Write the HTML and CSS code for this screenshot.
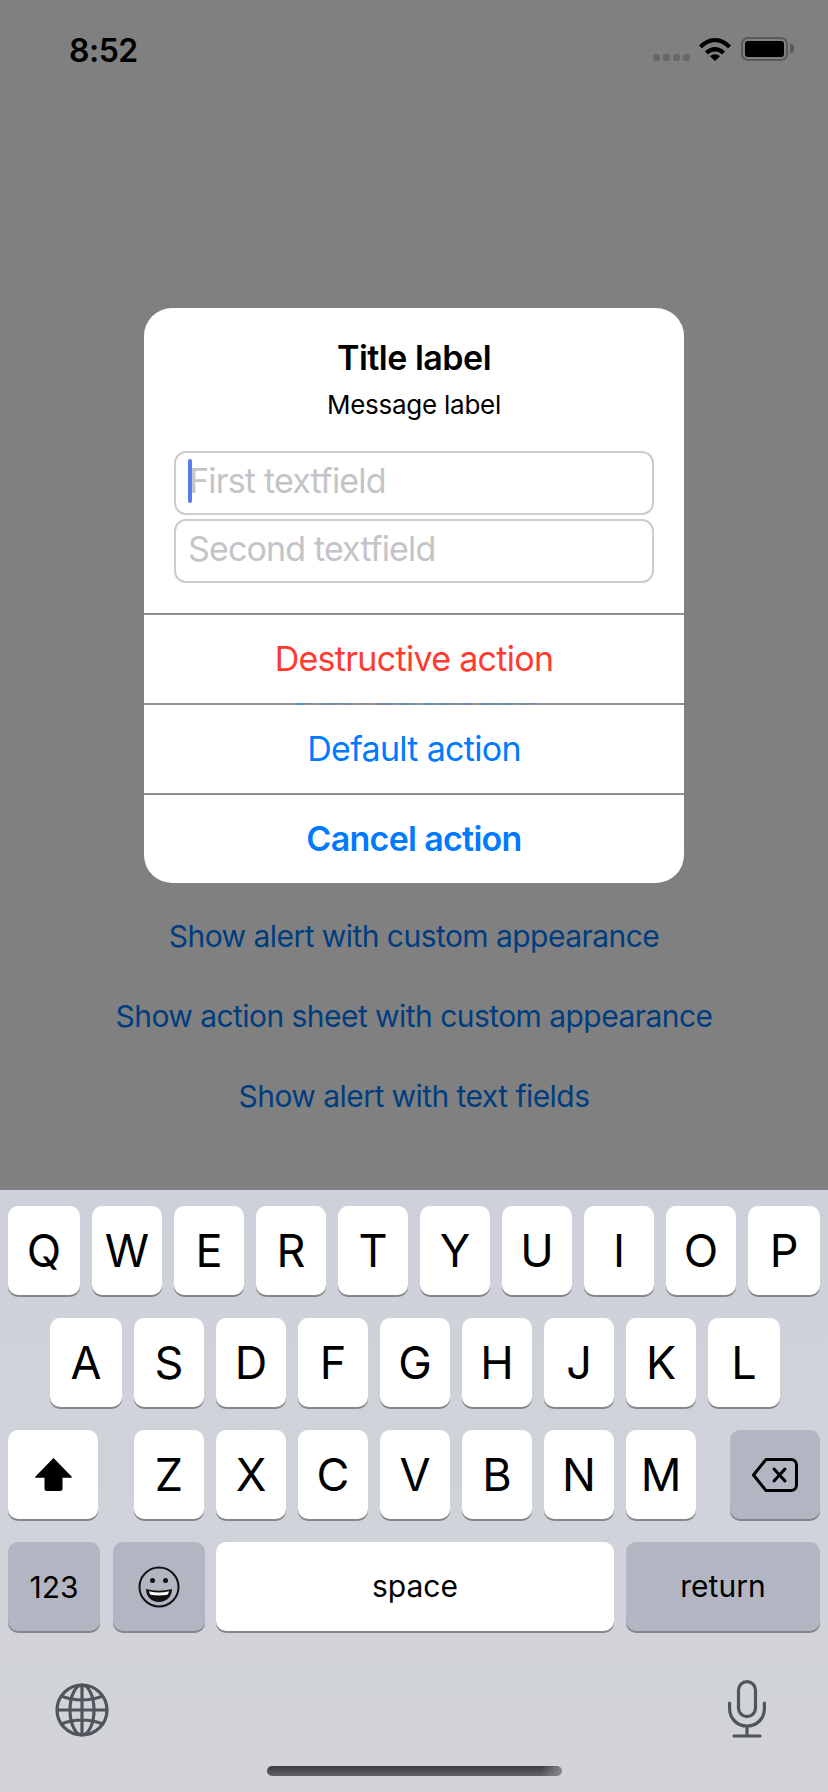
FILE: index.html
```html
<!DOCTYPE html>
<html lang="en">
<head>
<meta charset="utf-8">
<title>Alert with text fields</title>
<link rel="stylesheet" href="styles.css">
</head>
<body>
<div class="screen">
  <header class="status">
    <span class="time">8:52</span>
    <div class="status-icons">
      <div class="signal"><i></i><i></i><i></i><i></i></div>
      <svg class="wifi" viewBox="0 0 32 24" width="32" height="24"><path d="M0 8.6C4 4.2 9.7 1 16 1s12 3.2 16 7.6l-3 3C25.700 8 21.200 5.300 16 5.300S6.300 8 3 11.600Z"/><path d="M6 14.400C8.600 11.700 12.100 10 16 10s7.400 1.700 10 4.400l-3 3C21.200 15.600 18.700 14.400 16 14.400s-5.200 1.200-7 3Z"/><path d="M11 19.200C12.300 18 14.100 17.200 16 17.200s3.700.8 5 2L16 24Z"/></svg>
      <div class="battery"><div class="battery-fill"></div></div>
    </div>
  </header>
  <main class="links">
    <a class="link">Show alert with custom appearance</a>
    <a class="link">Show action sheet with custom appearance</a>
    <a class="link">Show alert with text fields</a>
  </main>
  <section class="keyboard">
    <div class="row">
      <div class="key wide">Q</div><div class="key">W</div><div class="key">E</div><div class="key">R</div><div class="key">T</div><div class="key">Y</div><div class="key">U</div><div class="key">I</div><div class="key">O</div><div class="key wide">P</div>
    </div>
    <div class="row row-home">
      <div class="key wide">A</div><div class="key">S</div><div class="key">D</div><div class="key">F</div><div class="key">G</div><div class="key">H</div><div class="key">J</div><div class="key">K</div><div class="key wide">L</div>
    </div>
    <div class="row">
      <div class="key shift">
        <svg viewBox="0 0 37 33" width="37" height="33"><path d="M18.500 0 36.500 18.500a.7.7 0 0 1-.5 1.300H27.500V30.500a2.500 2.500 0 0 1-2.500 2.500H12a2.500 2.500 0 0 1-2.500-2.500V19.800H1a.7.7 0 0 1-.5-1.300Z"/></svg>
      </div>
      <div class="letters">
        <div class="key">Z</div><div class="key">X</div><div class="key">C</div><div class="key">V</div><div class="key">B</div><div class="key">N</div><div class="key">M</div>
      </div>
      <div class="key dark delete">
        <svg viewBox="0 0 46 34" width="46" height="34" fill="none" stroke="#000" stroke-width="3" stroke-linejoin="round" stroke-linecap="round"><path d="M14 1.500H39a5.500 5.500 0 0 1 5.500 5.500V27a5.500 5.500 0 0 1-5.500 5.500H14L1.500 17Z"/><path d="M22 11 33 23M33 11 22 23"/></svg>
      </div>
    </div>
    <div class="row">
      <div class="key dark small-text mode">123</div>
      <div class="key dark mode emoji">
        <svg viewBox="0 0 42 42" width="42" height="42"><circle cx="21" cy="21" r="19.500" fill="none" stroke="#111" stroke-width="2"/><circle cx="14.500" cy="14.500" r="2.500" fill="#111"/><circle cx="27.500" cy="14.500" r="2.500" fill="#111"/><path d="M8 23Q21 26.500 34 23C34 31 28 36 21 36S8 31 8 23Z" fill="#111"/><path d="M11 25.300Q21 27.800 31 25.300Q30.500 28 29.500 28.800Q21 30.200 12.500 28.800Q11.500 28 11 25.300Z" fill="#fff"/></svg>
      </div>
      <div class="key space small-text word">space</div>
      <div class="key dark small-text return word">return</div>
    </div>
    <div class="kb-bottom">
      <svg class="globe" viewBox="0 0 54 54" width="54" height="54" fill="none" stroke="#50555c" stroke-width="3.200"><circle cx="27" cy="27" r="25"/><ellipse cx="27" cy="27" rx="12" ry="25"/><path d="M27 2V52M2 27H52M6 13Q27 21 48 13M6 41Q27 33 48 41"/></svg>
      <svg class="mic" viewBox="0 0 38 58" width="38" height="58" fill="none" stroke="#50555c" stroke-width="3.200" stroke-linecap="round"><rect x="10.500" y="1.600" width="17" height="35" rx="8.500"/><path d="M1.600 23V28.500C1.600 38.500 9 46 19 46S36.400 38.500 36.400 28.500V23M19 46V56M6 56H32"/></svg>
    </div>
    <div class="home-bar"></div>
  </section>

  <div class="alert">
    <div class="alert-head">
      <div class="alert-title">Title label</div>
      <div class="alert-message">Message label</div>
    </div>
    <div class="fields">
      <div class="field"><span class="caret"></span><span class="placeholder">First textfield</span></div>
      <div class="field"><span class="placeholder">Second textfield</span></div>
    </div>
    <div class="action destructive">Destructive action</div>
    <div class="action"><span class="peek"><span class="peek-text">Show default alert</span></span>Default action</div>
    <div class="action bold">Cancel action</div>
  </div>
</div>
</body>
</html>
```
FILE: styles.css
```css
* { box-sizing: border-box; }
html, body { margin: 0; padding: 0; }
body { width: 828px; height: 1792px; overflow: hidden; font-family: Inter, "Liberation Sans", sans-serif; color: #000; }
.screen { position: relative; width: 828px; height: 1792px; background: #808080; display: flex; flex-direction: column; }

.status { height: 88px; flex: none; display: flex; justify-content: space-between; padding: 37px 40px 0 69px; }
.time { font-size: 32px; font-weight: 600; line-height: 26px; letter-spacing: -0.5px; padding-top: 1px; }
.status-icons { display: flex; align-items: flex-start; }
.signal { display: flex; gap: 3px; margin-top: 17px; margin-right: 9px; }
.signal i { width: 7px; height: 7px; border-radius: 2px; background: #686868; }
.wifi { fill: #000; margin-right: 10px; }
.battery { position: relative; width: 47px; height: 24px; border: 2.500px solid #5a5a5a; border-radius: 7px; padding: 2px; }
.battery::after { content: ""; position: absolute; right: -7.500px; top: 5px; width: 3.500px; height: 9px; background: #5a5a5a; border-radius: 0 3px 3px 0; }
.battery-fill { width: 100%; height: 100%; background: #000; border-radius: 3px; }

.links { flex: 1; display: flex; flex-direction: column; align-items: center; justify-content: flex-end; gap: 44px; padding-bottom: 76px; }
.link { font-size: 30px; line-height: 36px; color: #003d7f; letter-spacing: -0.55px; }

.keyboard { flex: none; height: 602px; padding-top: 16px; background: linear-gradient(#ced1d9, #d2d4d9); display: flex; flex-direction: column; gap: 23px; position: relative; }
.row { display: flex; gap: 12px; padding: 0 8px; height: 89px; }
.row-home { padding: 0 48px 0 50px; }
.letters { display: flex; gap: 12px; flex: none; margin: 0 22px 0 24px; }
.key { flex: none; width: 70px; height: 89px; background: #fff; border-radius: 10px; box-shadow: 0 2px 0 #85868a; display: flex; align-items: center; justify-content: center; font-size: 45px; line-height: 1; }
.key.wide { width: 72px; }
.key.shift { width: 90px; }
.key.delete { width: 90px; }
.key.dark { background: #b1b6c2; }
.key.mode { width: 92px; }
.key.emoji { margin-left: 1px; }
.key.space { flex: 1; width: auto; margin-left: -1px; }
.key.return { width: 194px; }
.small-text { font-size: 30px; }
.word { padding-bottom: 2px; }

.kb-bottom { position: absolute; left: 55px; right: 62px; top: 493px; display: flex; justify-content: space-between; align-items: flex-start; }
.mic { margin-top: -3px; }
.home-bar { position: absolute; left: 267px; top: 576px; width: 295px; height: 10px; border-radius: 5px; background: linear-gradient(90deg, rgba(128,128,130,0) 93%, rgba(150,151,153,0.8)), linear-gradient(#3c3d3f, #626366); }

.alert { position: absolute; left: 144px; top: 308px; width: 540px; height: 575px; background: #fff; border-radius: 28px; overflow: hidden; display: flex; flex-direction: column; }
.alert-head { text-align: center; padding-top: 28px; height: 143px; flex: none; }
.alert-title { font-size: 34px; line-height: 44px; font-weight: 600; letter-spacing: -0.5px; }
.alert-message { font-size: 26px; line-height: 34px; margin-top: 8px; letter-spacing: -0.25px; }
.fields { flex: none; height: 162px; padding: 0 30px; display: flex; flex-direction: column; gap: 4px; }
.field { height: 64px; border: 2px solid #cccccc; border-radius: 12px; position: relative; padding: 0 0 4px 12px; display: flex; align-items: center; }
.field .caret + .placeholder { margin-left: 1px; letter-spacing: -0.8px; }
.placeholder { font-size: 34px; color: #c4c4c6; letter-spacing: -0.85px; line-height: 40px; }
.caret { position: absolute; left: 12px; top: 6px; width: 4px; height: 44px; border-radius: 2px; background: #5a7bf0; }
.action { position: relative; flex: none; height: 90px; border-top: 2px solid #8f8f8f; font-size: 34px; line-height: 88px; text-align: center; color: #007aff; letter-spacing: -0.7px; }
.action.destructive { color: #ff3b30; }
.action.bold { font-weight: 600; flex: 1; }
.peek { position: absolute; left: 0; right: 0; top: -2px; height: 2px; overflow: hidden; display: block; }
.peek-text { display: block; position: absolute; left: 0; right: 0; bottom: -7px; text-align: center; font-size: 30px; font-weight: 400; line-height: 36px; letter-spacing: -0.55px; color: #5f8db8; }
```
